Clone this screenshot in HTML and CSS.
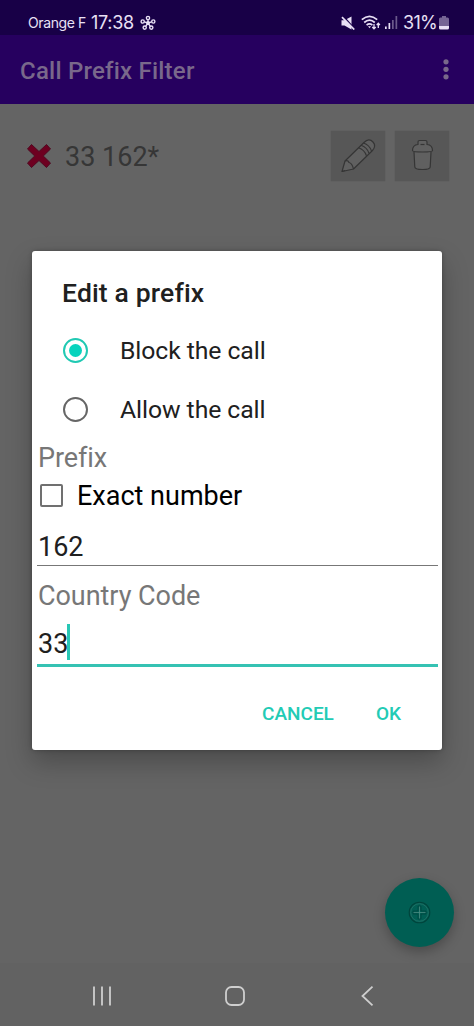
FILE: index.html
```html
<!DOCTYPE html>
<html lang="en">
<head>
<meta charset="utf-8">
<title>Call Prefix Filter</title>
<link rel="stylesheet" href="styles.css">
</head>
<body>
<div class="screen">
  <header class="status">
    <span class="carrier">Orange F</span>
    <span class="clock">17:38</span>
    <svg class="hub" width="16" height="16" viewBox="0 0 16 16" fill="none" stroke="currentColor" stroke-width="1.400">
      <path d="M8 8V4.500M8 8l-3.700-1.200M8 8l3.700-1.200M8 8l-2.300 3.300M8 8l2.300 3.300"/>
      <circle cx="8" cy="3" r="1.600"/><circle cx="2.700" cy="6.500" r="1.600"/><circle cx="13.300" cy="6.500" r="1.600"/><circle cx="4.700" cy="12.600" r="1.600"/><circle cx="11.300" cy="12.600" r="1.600"/>
      <circle cx="8" cy="8" r="1.200" fill="currentColor"/>
    </svg>
    <span class="spacer"></span>
    <svg class="mute" width="14" height="14" viewBox="0 0 14 14">
      <path fill="currentColor" d="M.5 4.200h3L10.500.5v13l-7-4h-3z"/>
      <path class="mute-gap" d="M2.300 .2l11 12.400"/>
      <path stroke="currentColor" stroke-width="1.700" d="M1 1.200l12.300 12.300"/>
    </svg>
    <svg class="wifi" width="20" height="15" viewBox="0 0 20 15" fill="none" stroke="currentColor" stroke-width="1.700">
      <path d="M.8 4.700Q8.500-2.100 16.200 4.700M3.200 7.500Q8.500 2.800 13.800 7.500M5.600 10.200Q8.500 7.700 11.400 10.200"/>
      <path d="M7 11.200h3l-1.500 2z" fill="currentColor" stroke="none"/>
      <path d="M13 9v4.500M11.300 12l1.700 1.800 1.700-1.800M17.300 13V8.500M15.700 10l1.600-1.700L18.900 10" stroke-width="1.300"/>
    </svg>
    <svg class="signal" width="13" height="13" viewBox="0 0 13 13" fill="currentColor">
      <path d="M0 10.500h1.700V13H0zM3.500 7h1.700v6H3.500z"/><path opacity=".4" d="M7 4h1.700v9H7zM10.500 0h1.700v13h-1.700z"/>
    </svg>
    <span class="percent">31%</span>
    <svg class="battery" width="10" height="14" viewBox="0 0 10 14" fill="currentColor">
      <path opacity=".45" d="M3 0h4v1.500h1.500Q10 1.500 10 3v7H0V3q0-1.500 1.500-1.500H3z"/><path d="M0 10h10v2q0 1.500-1.500 1.500h-7Q0 13.500 0 12z"/>
    </svg>
  </header>
  <div class="appbar">
    <h1 class="app-title">Call Prefix Filter</h1>
    <svg width="6" height="22" viewBox="0 0 6 22" fill="currentColor"><circle cx="3" cy="3.800" r="2.600"/><circle cx="3" cy="11.300" r="2.600"/><circle cx="3" cy="18.800" r="2.600"/></svg>
  </div>
  <main class="content">
    <div class="entry">
      <svg class="blocked" width="26" height="26" viewBox="0 0 26 26"><path d="M5.500 1.500L13 8.500l7.500-7L24.500 6l-7.200 7 7.200 7-4 4.500-7.500-7-7.500 7-4-4.500 7.200-7-7.200-7z" fill="#6d0020" stroke="#4f0820" stroke-width="1"/></svg>
      <span class="number">33 162*</span>
      <span class="tool"><svg width="54" height="50" viewBox="0 0 54 50" fill="none" stroke="#353535" stroke-width="1.200" stroke-linejoin="round">
        <path fill="#606060" d="M11 40.500L14 30 33 11.500q5-5 9-.5 3.500 4-.5 8.500L22.500 38z"/>
        <path d="M14 30q3-1 4 1.500 3 .5 4.500 6.500M11 40.500l3-1M27.500 16.800q6 2 8 8M30 14.300q6 2 8 8M32.500 12q6 2 8 8"/>
      </svg></span>
      <span class="tool"><svg width="54" height="50" viewBox="0 0 54 50" fill="none" stroke="#353535" stroke-width="1.200" stroke-linejoin="round">
        <path fill="#606060" d="M19 21l.8 15q0 2.500 7.700 2.500t7.700-2.500L36 21"/>
        <path fill="#606060" d="M23 13.500V11q0-1.500 1.500-1.500h6Q32 9.500 32 11v2.500q5.500.5 5.500 6 0 1.500-10 1.500t-10-1.500q0-5.500 5.500-6z"/>
        <path d="M25.500 13.500h4"/>
      </svg></span>
    </div>
    <div class="fab"><svg width="24" height="24" viewBox="0 0 24 24" fill="none" stroke="#00443c" stroke-width="1.100"><circle cx="11.500" cy="11.500" r="10.300"/><circle cx="11.500" cy="11.500" r="8.800" stroke="#2d766c" stroke-width=".7"/><path d="M10 5h3v5h5v3h-5v5h-3v-5H5v-3h5z" stroke-width=".7"/><path d="M11.500 5.500v12M5.500 11.500h12" stroke="#4b8b82" stroke-width=".8"/></svg></div>
  </main>
  <nav class="nav">
    <svg width="20" height="20" viewBox="0 0 20 20" fill="none" stroke="currentColor" stroke-width="1.800"><path d="M2 .5v19M10 .5v19M18 .5v19"/></svg>
    <svg width="20" height="20" viewBox="0 0 20 20" fill="none" stroke="currentColor" stroke-width="1.800"><rect x="1" y="1" width="18" height="18" rx="5.500"/></svg>
    <svg width="20" height="20" viewBox="0 0 20 20" fill="none" stroke="currentColor" stroke-width="1.800"><path d="M15.500.7L5.500 10l10 9.300"/></svg>
  </nav>
  <section class="dialog">
    <h2 class="dialog-title">Edit a prefix</h2>
    <div class="option"><span class="radio radio-on"></span><span>Block the call</span></div>
    <div class="option"><span class="radio"></span><span>Allow the call</span></div>
    <div class="label label-prefix">Prefix</div>
    <div class="exact"><span class="checkbox"></span><span class="exact-text">Exact number</span></div>
    <div class="field">162</div>
    <div class="label label-country">Country Code</div>
    <div class="field field-active">33<span class="caret"></span></div>
    <div class="actions"><span class="cancel">CANCEL</span><span class="ok">OK</span></div>
  </section>
</div>
</body>
</html>
```
FILE: styles.css
```css
* { box-sizing: border-box; }
body { margin: 0; font-family: Roboto, "Liberation Sans", sans-serif; }
svg { display: block; flex: none; }
span, h1, h2 { white-space: nowrap; }
.screen { position: relative; width: 474px; height: 1026px; display: flex; flex-direction: column; background: #646464; overflow: hidden; }

.status { height: 35px; flex: none; display: flex; align-items: center; padding: 10px 25px 0 28px; background: #180047; color: #e9e0f5; }
.carrier { width: 63px; font: 400 14px/24px Inter, sans-serif; letter-spacing: -.4px; }
.clock { width: 49px; font: 400 18px/24px Inter, sans-serif; letter-spacing: -.3px; }
.spacer { flex: 1; }
.mute { margin-right: 6px; }
.mute-gap { stroke: #180047; stroke-width: 1.500; }
.wifi { margin-right: 4px; }
.signal { margin-right: 5px; }
.percent { width: 36px; font: 400 18px/24px Inter, sans-serif; letter-spacing: -.7px; }

.appbar { height: 69px; flex: none; display: flex; align-items: center; justify-content: space-between; padding: 2px 25px 0 20px; background: #26005f; color: #79688b; }
.app-title { margin: 0; font-size: 24px; font-weight: 500; line-height: 30px; letter-spacing: .22px; }
.appbar svg { margin-top: -3px; }

.content { flex: 1; display: flex; flex-direction: column; justify-content: space-between; padding: 27px 20px 16px 26px; }
.entry { display: flex; align-items: center; height: 50px; padding-right: 5px; }
.number { flex: 1; padding: 2px 0 0 13px; font-size: 27px; color: #363636; }
.tool { background: #575757; box-shadow: 0 0 1px #4c4c4c; margin-left: 10px; }
.fab { align-self: flex-end; width: 69px; height: 69px; border-radius: 50%; background: #005e53; box-shadow: 0 5px 12px rgba(0, 0, 0, .25); display: grid; place-items: center; }

.nav { height: 63px; flex: none; display: flex; justify-content: space-between; align-items: center; padding: 2px 97px 0 92px; background: #626262; color: #cfcfcf; }

.dialog { position: absolute; left: 32px; top: 251px; width: 410px; height: 499px; padding: 13px 4px 0 5px; border-radius: 3px; background: #fff; color: #202020; box-shadow: 0 12px 26px rgba(0, 0, 0, .25), 0 0 4px rgba(0, 0, 0, .25); }
.dialog-title { margin: 0 0 0 25px; font-size: 26.500px; font-weight: 500; line-height: 57px; letter-spacing: .15px; }
.option { display: flex; align-items: center; height: 59px; padding-left: 26px; gap: 32px; font-size: 24.750px; letter-spacing: -.07px; }
.radio { width: 25px; height: 25px; border: 2px solid #666; border-radius: 50%; display: grid; place-items: center; }
.radio-on { border-color: #20c9b3; }
.radio-on::after { content: ""; width: 13px; height: 13px; border-radius: 50%; background: #08d3bd; }
.label { padding-left: 1px; font-size: 27px; line-height: 38px; color: #777; }
.label-prefix { letter-spacing: -.1px; }
.exact { display: flex; align-items: center; height: 37px; padding-left: 3px; gap: 14px; font-size: 27px; color: #000; }
.checkbox { width: 23px; height: 23px; border: 2px solid #707070; border-radius: 2px; }
.field { display: flex; align-items: center; height: 52px; padding: 14px 0 0 1px; border-bottom: 1px solid #777; font-size: 27px; }
.label-country { margin-top: 11px; letter-spacing: -.05px; }
.field-active { border-bottom: 3px solid #35c2b3; padding-top: 9px; }
.caret { width: 3px; height: 36px; margin: -4px 0 0 -1px; background: #28c7b5; }
.actions { display: flex; justify-content: flex-end; gap: 42px; padding: 32px 37px 0 0; font-size: 19px; font-weight: 500; line-height: 30px; color: #22cbb5; }
```
